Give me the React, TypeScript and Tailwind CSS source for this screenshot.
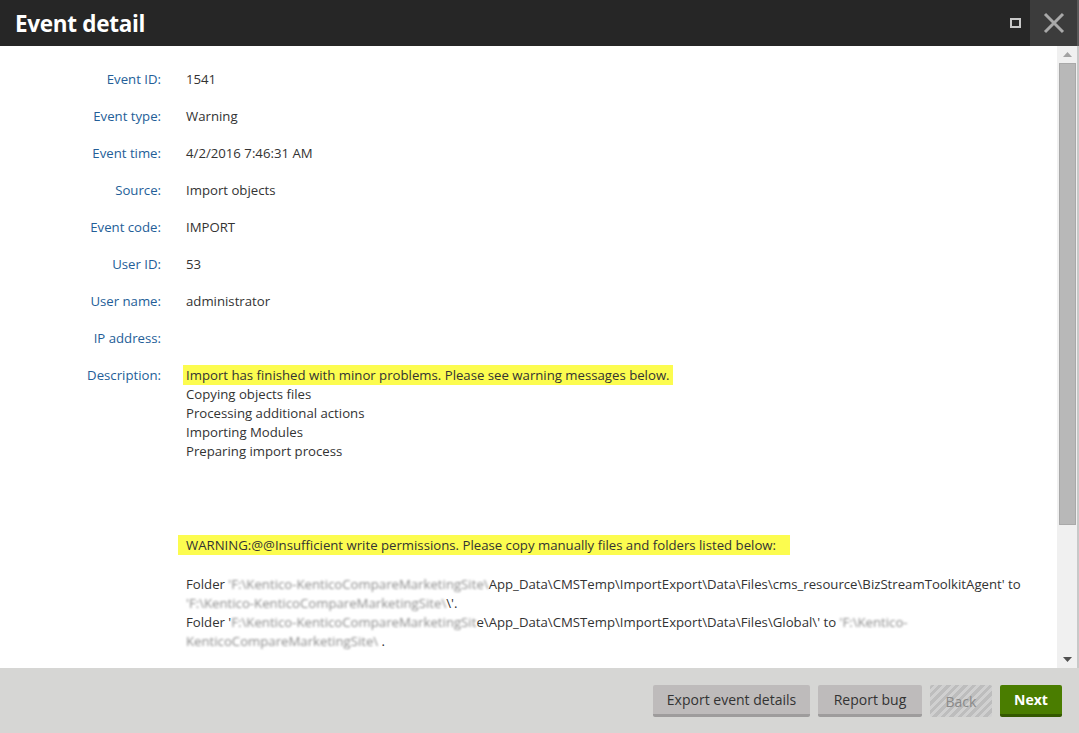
import React from "react";

const FONT = { fontFamily: "'Open Sans', 'Noto Sans', sans-serif" };

const rows: { label: string; value: string }[] = [
  { label: "Event ID:", value: "1541" },
  { label: "Event type:", value: "Warning" },
  { label: "Event time:", value: "4/2/2016 7:46:31 AM" },
  { label: "Source:", value: "Import objects" },
  { label: "Event code:", value: "IMPORT" },
  { label: "User ID:", value: "53" },
  { label: "User name:", value: "administrator" },
  { label: "IP address:", value: "" },
];

function Blur({ children }: { children: React.ReactNode }) {
  return <span className="text-[#8c8c8c] blur-[1.2px]">{children}</span>;
}

export default function App() {
  return (
    <div className="w-[1079px] h-[733px] flex flex-col bg-white overflow-hidden text-[#333]" style={FONT}>
      {/* Title bar */}
      <div className="h-[46px] flex items-center bg-[#262626] shrink-0">
        <h1 className="flex-1 pl-[15px] pt-[2px] text-white text-[22.5px] font-bold leading-none tracking-[-0.3px]">Event detail</h1>
        <div className="w-[30px] h-[46px] flex items-center justify-center">
          <div className="w-[11px] h-[10px] border-2 border-[#c8c8c8]" />
        </div>
        <div className="w-[47px] h-[46px] flex items-center justify-center bg-[#3c3c3c]">
          <svg width="22" height="22" viewBox="0 0 22 22">
            <path d="M2 2 L20 20 M20 2 L2 20" stroke="#a9a9a9" strokeWidth="3" />
          </svg>
        </div>
        <div className="w-[2px] h-[46px] bg-[#5a5a5a]" />
      </div>

      {/* Body */}
      <div className="flex-1 flex min-h-0">
        <div className="flex-1 overflow-hidden pt-[24px] text-[13.2px] leading-[19px]">
          {rows.map((r) => (
            <div key={r.label} className="flex mb-[18px]">
              <div className="w-[161px] text-right text-[#245e98] shrink-0">{r.label}</div>
              <div className="pl-[25px]">{r.value || "\u00a0"}</div>
            </div>
          ))}
          <div className="flex">
            <div className="w-[161px] text-right text-[#245e98] shrink-0">Description:</div>
            <div className="pl-[25px] pr-[20px] whitespace-nowrap">
              <div>
                <span className="bg-[#fcfc4f] -ml-[3px] px-[3px] py-[1px]">
                  Import has finished with minor problems. Please see warning messages below.
                </span>
              </div>
              <div>Copying objects files</div>
              <div>Processing additional actions</div>
              <div>Importing Modules</div>
              <div>Preparing import process</div>
              <div className="h-[74px]" />
              <div>
                <span className="inline-block bg-[#fcfc4f] -ml-[8px] pl-[8px] pr-[14px] leading-[20px]">
                  WARNING:@@Insufficient write permissions. Please copy manually files and folders listed below:
                </span>
              </div>
              <div className="h-[20px]" />
              <div>
                Folder <Blur>'F:\Kentico-KenticoCompareMarketingSite\</Blur>App_Data\CMSTemp\ImportExport\Data\Files\cms_resource\BizStreamToolkitAgent' to
              </div>
              <div>
                <Blur>'F:\Kentico-KenticoCompareMarketingSite\</Blur>\'.
              </div>
              <div>
                Folder '<Blur>F:\Kentico-KenticoCompareMarketingSit</Blur>e\App_Data\CMSTemp\ImportExport\Data\Files\Global\' to <Blur>'F:\Kentico-</Blur>
              </div>
              <div>
                <Blur>KenticoCompareMarketingSite\</Blur> .
              </div>
            </div>
          </div>
        </div>

        {/* Scrollbar */}
        <div className="w-[20px] bg-[#f0f0f0] flex flex-col items-center">
          <div className="h-[17px] flex items-center justify-center">
            <svg width="9" height="5" viewBox="0 0 9 5"><path d="M0 5 L4.5 0 L9 5 Z" fill="#a3a3a3" /></svg>
          </div>
          <div className="w-[17px] h-[462px] bg-[#b8b8b8] border border-[#a9a9a9]" />
          <div className="flex-1" />
          <div className="h-[17px] flex items-center justify-center">
            <svg width="9" height="5" viewBox="0 0 9 5"><path d="M0 0 L9 0 L4.5 5 Z" fill="#505050" /></svg>
          </div>
        </div>
        <div className="w-[2px] bg-[#c8c8c8]" />
      </div>

      {/* Footer */}
      <div className="h-[65px] shrink-0 bg-[#d6d6d4] flex items-start justify-end gap-[8px] pt-[17px] pr-[17px] text-[14px] whitespace-nowrap">
        <button className="h-[32px] w-[157px] bg-[#bebbbb] border-b-[3px] border-[#9e9c9c] rounded-[2px] text-[#333]">
          Export event details
        </button>
        <button className="h-[32px] w-[104px] bg-[#bebbbb] border-b-[3px] border-[#9e9c9c] rounded-[2px] text-[#333]">
          Report bug
        </button>
        <button className="h-[32px] w-[62px] rounded-[2px] text-[#8a8a8a] bg-[repeating-linear-gradient(135deg,#bdbdbd_0px,#bdbdbd_3px,#d0d0d0_3px,#d0d0d0_6px)]">
          Back
        </button>
        <button className="h-[32px] w-[62px] bg-[#4a7d00] border-b-[3px] border-[#345800] rounded-[2px] text-white font-bold">
          Next
        </button>
      </div>
    </div>
  );
}
